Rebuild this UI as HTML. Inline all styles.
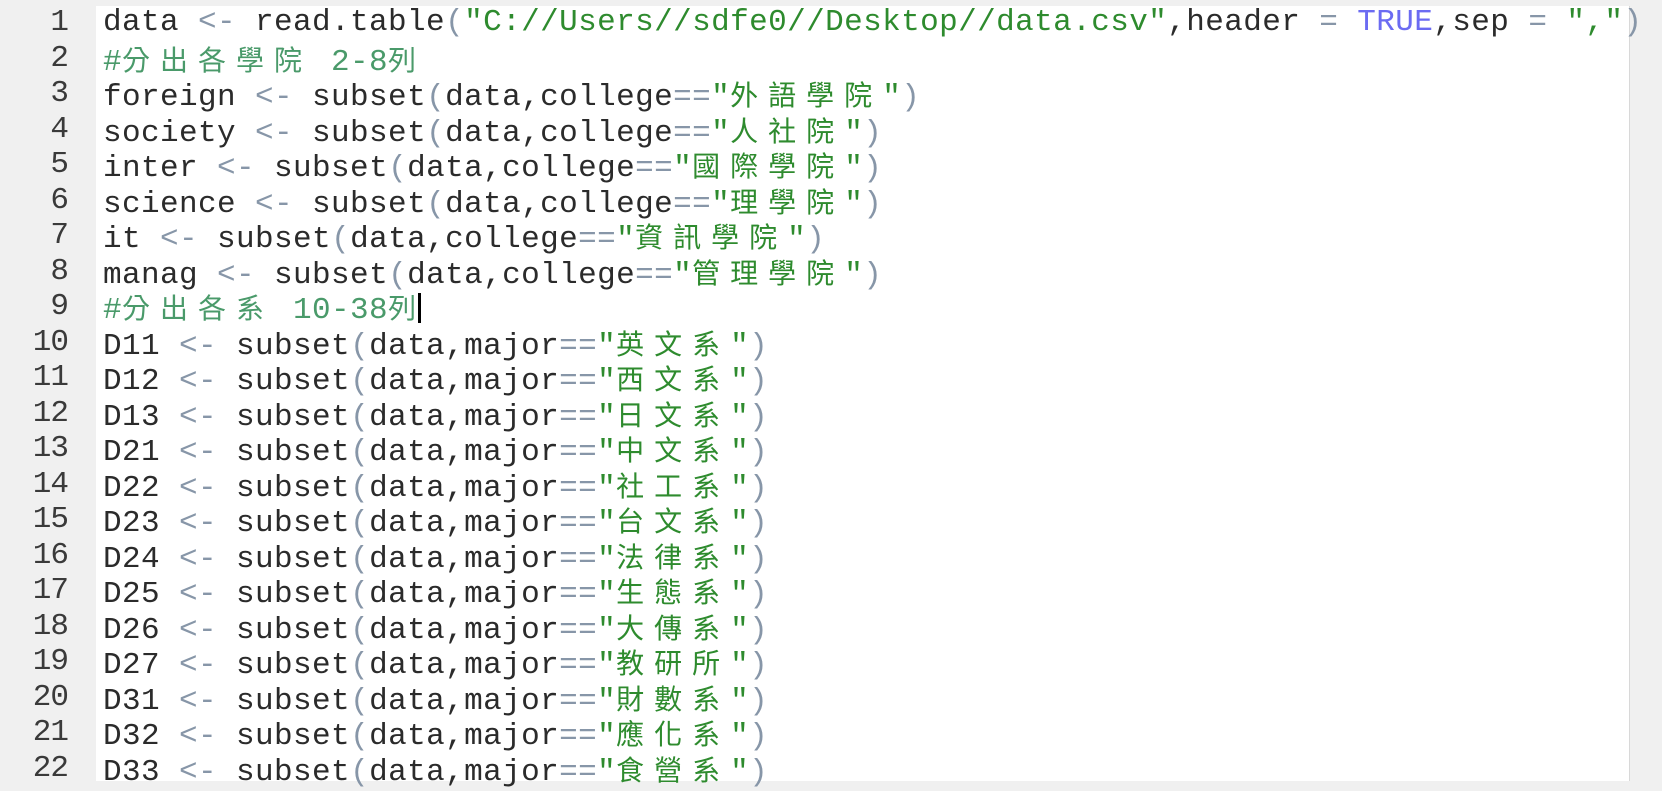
<!DOCTYPE html>
<html><head><meta charset="utf-8"><style>
html,body{margin:0;padding:0;width:1662px;height:788px;overflow:hidden;background:#f0f0f0;}
#ed{position:absolute;left:0;top:6px;width:1629px;height:775px;background:#fff;border-right:1px solid #d8d8d8;}
#gut{position:absolute;left:0;top:6px;width:96px;height:775px;background:#f0f0f0;}
.ln,.cd{font-family:"Liberation Mono","Noto Sans CJK TC",monospace;font-size:31px;line-height:36px;height:36px;}
.ln{position:absolute;left:0;width:68px;text-align:right;color:#3a3a3a;letter-spacing:-1px;}
.cd{position:absolute;left:103px;white-space:pre;letter-spacing:0.4px;color:#2b2b2b;}
.op{color:#8796a8}.p{color:#8796a8}.s{color:#2e8b2e}.c{color:#4a9a6a}.k{color:#6b6bf2}
.j{font-family:"Noto Sans CJK TC",sans-serif;font-size:28px;letter-spacing:10px;}
.cur{display:inline-block;width:3px;height:30px;background:#000;vertical-align:-5px;}
</style></head><body>
<div id="ed"></div><div id="gut"></div>
<div class="ln" style="top:5px">1</div>
<div class="cd" style="top:5px">data <span class="op">&lt;-</span> read.table<span class="p">(</span><span class="s">"C://Users//sdfe0//Desktop//data.csv"</span>,header <span class="op">=</span> <span class="k">TRUE</span>,sep <span class="op">=</span> <span class="s">","</span><span class="p">)</span></div>
<div class="ln" style="top:40.5px">2</div>
<div class="cd c" style="top:40.5px">#<span class="j">分出各學院</span> 2-8<span class="j" style="letter-spacing:2px">列</span></div>
<div class="ln" style="top:76px">3</div>
<div class="cd" style="top:76px">foreign <span class="op">&lt;-</span> subset<span class="p">(</span>data,college<span class="op">==</span><span class="s">"<span class="j">外語學院</span>"</span><span class="p">)</span></div>
<div class="ln" style="top:111.5px">4</div>
<div class="cd" style="top:111.5px">society <span class="op">&lt;-</span> subset<span class="p">(</span>data,college<span class="op">==</span><span class="s">"<span class="j">人社院</span>"</span><span class="p">)</span></div>
<div class="ln" style="top:147px">5</div>
<div class="cd" style="top:147px">inter <span class="op">&lt;-</span> subset<span class="p">(</span>data,college<span class="op">==</span><span class="s">"<span class="j">國際學院</span>"</span><span class="p">)</span></div>
<div class="ln" style="top:182.5px">6</div>
<div class="cd" style="top:182.5px">science <span class="op">&lt;-</span> subset<span class="p">(</span>data,college<span class="op">==</span><span class="s">"<span class="j">理學院</span>"</span><span class="p">)</span></div>
<div class="ln" style="top:218px">7</div>
<div class="cd" style="top:218px">it <span class="op">&lt;-</span> subset<span class="p">(</span>data,college<span class="op">==</span><span class="s">"<span class="j">資訊學院</span>"</span><span class="p">)</span></div>
<div class="ln" style="top:253.5px">8</div>
<div class="cd" style="top:253.5px">manag <span class="op">&lt;-</span> subset<span class="p">(</span>data,college<span class="op">==</span><span class="s">"<span class="j">管理學院</span>"</span><span class="p">)</span></div>
<div class="ln" style="top:289px">9</div>
<div class="cd c" style="top:289px">#<span class="j">分出各系</span> 10-38<span class="j" style="letter-spacing:2px">列</span><span class="cur"></span></div>
<div class="ln" style="top:324.5px">10</div>
<div class="cd" style="top:324.5px">D11 <span class="op">&lt;-</span> subset<span class="p">(</span>data,major<span class="op">==</span><span class="s">"<span class="j">英文系</span>"</span><span class="p">)</span></div>
<div class="ln" style="top:360px">11</div>
<div class="cd" style="top:360px">D12 <span class="op">&lt;-</span> subset<span class="p">(</span>data,major<span class="op">==</span><span class="s">"<span class="j">西文系</span>"</span><span class="p">)</span></div>
<div class="ln" style="top:395.5px">12</div>
<div class="cd" style="top:395.5px">D13 <span class="op">&lt;-</span> subset<span class="p">(</span>data,major<span class="op">==</span><span class="s">"<span class="j">日文系</span>"</span><span class="p">)</span></div>
<div class="ln" style="top:431px">13</div>
<div class="cd" style="top:431px">D21 <span class="op">&lt;-</span> subset<span class="p">(</span>data,major<span class="op">==</span><span class="s">"<span class="j">中文系</span>"</span><span class="p">)</span></div>
<div class="ln" style="top:466.5px">14</div>
<div class="cd" style="top:466.5px">D22 <span class="op">&lt;-</span> subset<span class="p">(</span>data,major<span class="op">==</span><span class="s">"<span class="j">社工系</span>"</span><span class="p">)</span></div>
<div class="ln" style="top:502px">15</div>
<div class="cd" style="top:502px">D23 <span class="op">&lt;-</span> subset<span class="p">(</span>data,major<span class="op">==</span><span class="s">"<span class="j">台文系</span>"</span><span class="p">)</span></div>
<div class="ln" style="top:537.5px">16</div>
<div class="cd" style="top:537.5px">D24 <span class="op">&lt;-</span> subset<span class="p">(</span>data,major<span class="op">==</span><span class="s">"<span class="j">法律系</span>"</span><span class="p">)</span></div>
<div class="ln" style="top:573px">17</div>
<div class="cd" style="top:573px">D25 <span class="op">&lt;-</span> subset<span class="p">(</span>data,major<span class="op">==</span><span class="s">"<span class="j">生態系</span>"</span><span class="p">)</span></div>
<div class="ln" style="top:608.5px">18</div>
<div class="cd" style="top:608.5px">D26 <span class="op">&lt;-</span> subset<span class="p">(</span>data,major<span class="op">==</span><span class="s">"<span class="j">大傳系</span>"</span><span class="p">)</span></div>
<div class="ln" style="top:644px">19</div>
<div class="cd" style="top:644px">D27 <span class="op">&lt;-</span> subset<span class="p">(</span>data,major<span class="op">==</span><span class="s">"<span class="j">教研所</span>"</span><span class="p">)</span></div>
<div class="ln" style="top:679.5px">20</div>
<div class="cd" style="top:679.5px">D31 <span class="op">&lt;-</span> subset<span class="p">(</span>data,major<span class="op">==</span><span class="s">"<span class="j">財數系</span>"</span><span class="p">)</span></div>
<div class="ln" style="top:715px">21</div>
<div class="cd" style="top:715px">D32 <span class="op">&lt;-</span> subset<span class="p">(</span>data,major<span class="op">==</span><span class="s">"<span class="j">應化系</span>"</span><span class="p">)</span></div>
<div class="ln" style="top:750.5px">22</div>
<div class="cd" style="top:750.5px">D33 <span class="op">&lt;-</span> subset<span class="p">(</span>data,major<span class="op">==</span><span class="s">"<span class="j">食營系</span>"</span><span class="p">)</span></div>
</body></html>
